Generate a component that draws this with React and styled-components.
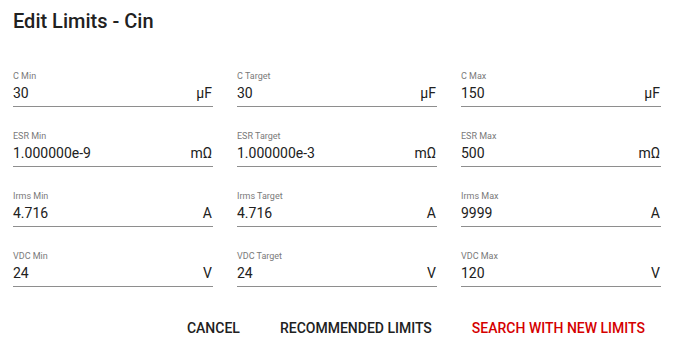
import React from 'react'
import styled, { createGlobalStyle } from 'styled-components'

const GlobalStyle = createGlobalStyle`
  body {
    margin: 0;
    background: #fff;
    font-family: Roboto, 'Liberation Sans', sans-serif;
  }
`

const fields = [
  ['C Min', '30', 'μF'], ['C Target', '30', 'μF'], ['C Max', '150', 'μF'],
  ['ESR Min', '1.000000e-9', 'mΩ'], ['ESR Target', '1.000000e-3', 'mΩ'], ['ESR Max', '500', 'mΩ'],
  ['Irms Min', '4.716', 'A'], ['Irms Target', '4.716', 'A'], ['Irms Max', '9999', 'A'],
  ['VDC Min', '24', 'V'], ['VDC Target', '24', 'V'], ['VDC Max', '120', 'V'],
]

const App = () => {
  return (
    <Dialog>
      <GlobalStyle />
      <Title>Edit Limits - Cin</Title>
      <FieldGrid>
        {fields.map(([label, value, unit]) => (
          <Field key={label}>
            <Label>{label}</Label>
            <InputRow>
              <Value>{value}</Value>
              <Unit>{unit}</Unit>
            </InputRow>
          </Field>
        ))}
      </FieldGrid>
      <Actions>
        <Button>Cancel</Button>
        <Button>Recommended Limits</Button>
        <Button primary>Search with new limits</Button>
      </Actions>
    </Dialog>
  )
}

const Dialog = styled.div`
  width: 680px;
  height: 352px;
  box-sizing: border-box;
  padding: 5px 19px 0 13px;
  display: flex;
  flex-direction: column;
`

const Title = styled.h2`
  margin: 0;
  font-size: 20px;
  line-height: 32px;
  font-weight: 500;
  color: #212121;
`

const FieldGrid = styled.div`
  margin-top: 33px;
  display: grid;
  grid-template-columns: repeat(3, 200px);
  column-gap: 24px;
  row-gap: 23px;
`

const Field = styled.div`
  display: flex;
  flex-direction: column;
`

const Label = styled.label`
  font-size: 9px;
  line-height: 12px;
  color: #7a7a7a;
`

const InputRow = styled.div`
  margin-top: 1px;
  display: flex;
  justify-content: space-between;
  align-items: baseline;
  padding-bottom: 3px;
  border-bottom: 1px solid #8e8e8e;
  font-size: 14px;
  line-height: 20px;
  color: #212121;
`

const Value = styled.span``

const Unit = styled.span`
  padding-right: 1px;
`

const Actions = styled.div`
  margin-top: 25px;
  display: flex;
  justify-content: flex-end;
  gap: 8px;
`

const Button = styled.button`
  border: none;
  background: none;
  padding: 6px 16px;
  font-family: inherit;
  font-size: 14px;
  line-height: 20px;
  font-weight: 500;
  text-transform: uppercase;
  color: ${(p) => (p.primary ? '#d50000' : '#212121')};
  cursor: pointer;
`

export default App
